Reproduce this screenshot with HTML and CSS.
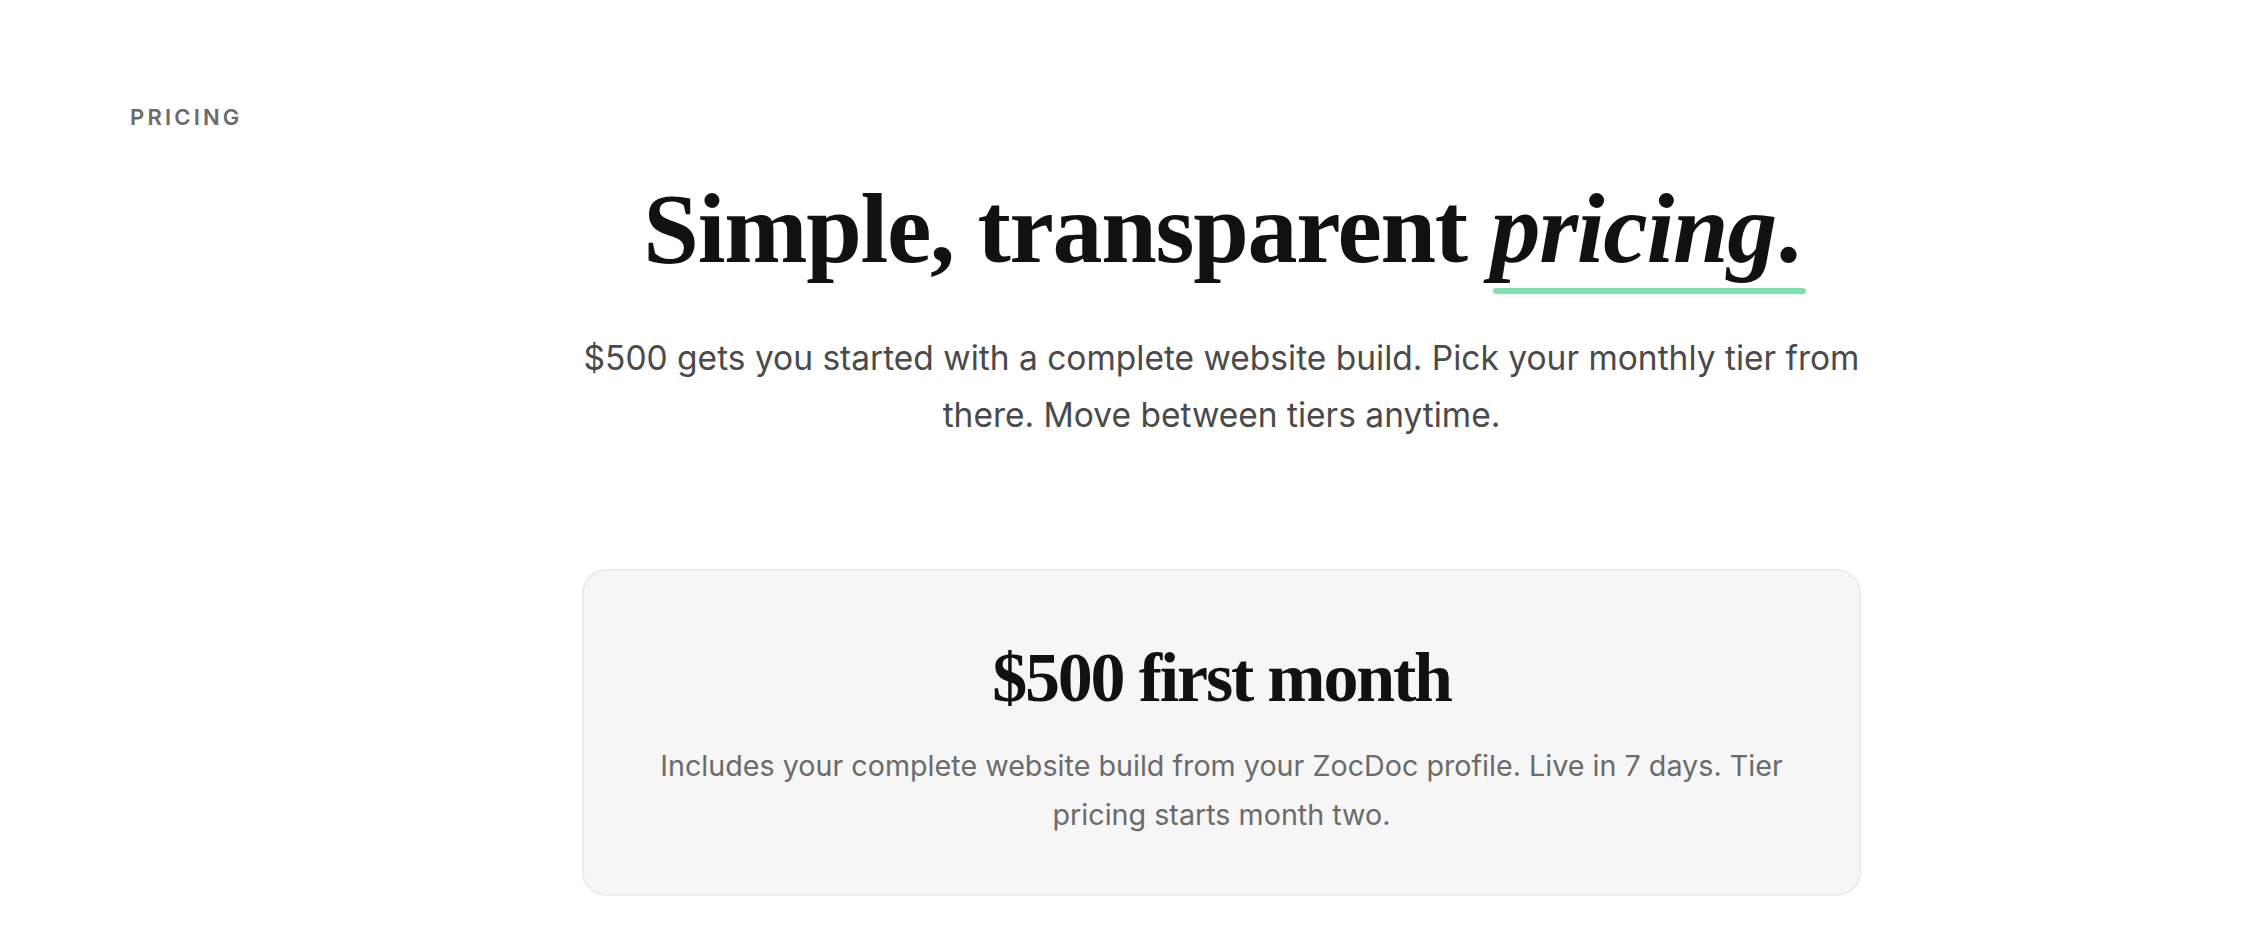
FILE: index.html
```html
<!DOCTYPE html>
<html lang="en">
<head>
<meta charset="utf-8">
<title>Pricing</title>
<link rel="stylesheet" href="styles.css">
</head>
<body>
<section class="pricing">
  <div class="label-col"><span class="eyebrow">PRICING</span></div>
  <div class="main-col">
    <div class="content">
      <h1 class="headline">Simple, transparent <span class="hl"><em>pricing</em>.</span></h1>
      <p class="lede">$500 gets you started with a complete website build. Pick your monthly tier from there. Move between tiers anytime.</p>
      <div class="card">
        <h2 class="card-title">$500 first month</h2>
        <p class="card-text">Includes your complete website build from your ZocDoc profile. Live in 7 days. Tier pricing starts month two.</p>
      </div>
    </div>
  </div>
</section>
</body>
</html>
```
FILE: styles.css
```css
* { box-sizing: border-box; }
html, body { margin: 0; padding: 0; background: #ffffff; }
body { font-family: "Inter", "Liberation Sans", sans-serif; color: #111; }

.pricing {
  display: grid;
  grid-template-columns: 183px 1fr;
  padding: 104px 130px 0 130px;
  min-height: 952px;
}
.eyebrow {
  display: block;
  font-size: 22px;
  font-weight: 600;
  letter-spacing: 3.2px;
  color: #6b6b6b;
  line-height: 26px;
}
.main-col { display: flex; justify-content: center; }
.content { width: 1279px; display: flex; flex-direction: column; align-items: center; padding-top: 75px; }

.headline {
  margin: 0;
  font-family: "Liberation Serif", "Times New Roman", serif;
  font-weight: 700;
  font-size: 100px;
  letter-spacing: -1.3px;
  line-height: 1;
  color: #111111;
  text-align: center;
}
.hl { position: relative; display: inline-block; }
.hl em { font-style: italic; }
.hl::after {
  content: "";
  position: absolute;
  left: 2px;
  right: -6px;
  bottom: -15px;
  height: 6px;
  border-radius: 3px;
  background: #7ee1b0;
}

.lede {
  margin: 51px 0 0 0;
  width: 1320px;
  font-size: 33.5px;
  line-height: 57px;
  color: #4a4a4a;
  text-align: center;
}

.card {
  margin-top: 125px;
  width: 100%;
  background: #f6f6f6;
  border: 2px solid #ececec;
  border-radius: 24px;
  padding: 72px 60px 55px;
  text-align: center;
}
.card-title {
  margin: 0;
  font-family: "Liberation Serif", "Times New Roman", serif;
  font-weight: 700;
  font-size: 70px;
  letter-spacing: -2.2px;
  line-height: 1;
  color: #111111;
}
.card-text {
  margin: 28px auto 0;
  max-width: 1150px;
  font-size: 28.7px;
  line-height: 49px;
  color: #6b6b6b;
}
```
